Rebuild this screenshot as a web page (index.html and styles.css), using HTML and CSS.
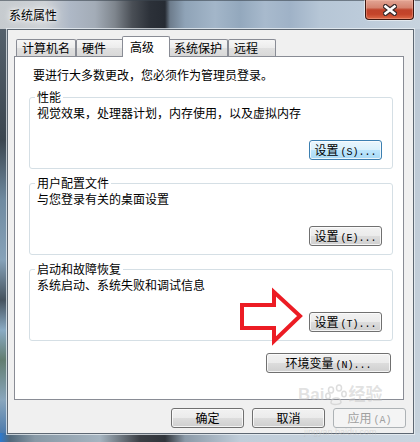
FILE: index.html
```html
<!DOCTYPE html>
<html lang="zh-CN">
<head>
<meta charset="utf-8">
<title>系统属性</title>
<link rel="stylesheet" href="styles.css">
</head>
<body>
<div class="window">
  <div class="titlebar">
    <span class="title">系统属性</span>
    <div class="close">
      <svg width="14" height="12" viewBox="-7 -6 14 12">
        <path d="M-4.5,-3.5 L4.5,3.5 M4.5,-3.5 L-4.5,3.5" stroke="#3a2a2a" stroke-width="5" stroke-linecap="square" fill="none"/>
        <path d="M-4.5,-3.5 L4.5,3.5 M4.5,-3.5 L-4.5,3.5" stroke="#ffffff" stroke-width="2.6" stroke-linecap="square" fill="none"/>
      </svg>
    </div>
  </div>
  <div class="client">
    <div class="tabs">
      <div class="tab">计算机名</div>
      <div class="tab">硬件</div>
      <div class="tab active">高级</div>
      <div class="tab">系统保护</div>
      <div class="tab">远程</div>
    </div>
    <div class="panel">
      <p class="intro">要进行大多数更改，您必须作为管理员登录。</p>
      <fieldset class="group">
        <legend>性能</legend>
        <p class="desc">视觉效果，处理器计划，内存使用，以及虚拟内存</p>
        <div class="row"><button class="btn hot">设置<span class="a">(S)...</span></button></div>
      </fieldset>
      <fieldset class="group">
        <legend>用户配置文件</legend>
        <p class="desc">与您登录有关的桌面设置</p>
        <div class="row"><button class="btn">设置<span class="a">(E)...</span></button></div>
      </fieldset>
      <fieldset class="group">
        <legend>启动和故障恢复</legend>
        <p class="desc">系统启动、系统失败和调试信息</p>
        <div class="row"><button class="btn">设置<span class="a">(T)...</span></button></div>
      </fieldset>
      <div class="row env-row"><button class="btn wide">环境变量<span class="a">(N)...</span></button></div>
    </div>
    <div class="footer">
      <button class="btn">确定</button>
      <button class="btn">取消</button>
      <button class="btn" disabled>应用<span class="a">(A)</span></button>
    </div>
  </div>
  <svg class="arrow" width="420" height="442" viewBox="0 0 420 442">
    <polygon points="242,305 274,305 274,292 300,316 274,341 274,328 242,328" fill="none" stroke="#ec1c24" stroke-width="4" stroke-linejoin="miter"/>
  </svg>
  <div class="watermark">
    <span class="wm-big">Bai</span><span class="wm-paw">
      <svg width="22" height="22" viewBox="0 0 22 22">
        <g fill="none" stroke="#c8c8c8" stroke-width="1.5">
          <ellipse cx="6" cy="6" rx="2.5" ry="3"/>
          <ellipse cx="14" cy="4" rx="2.5" ry="3"/>
          <ellipse cx="19" cy="10" rx="2.2" ry="2.8"/>
          <ellipse cx="3" cy="12" rx="2.2" ry="2.8"/>
          <path d="M6,19 C6,13 15,12 16,18 C16,21 7,21 6,19 Z"/>
        </g>
      </svg></span><span class="wm-big">经验</span>
    <div class="wm-small">jingyan.baidu.com</div>
  </div>
</div>
</body>
</html>
```
FILE: styles.css
```css
html, body {
  margin: 0;
  padding: 0;
}
body {
  width: 420px;
  height: 442px;
  overflow: hidden;
  font-family: "Noto Sans CJK SC", "Noto Sans CJK JP", sans-serif;
  font-size: 12px;
  line-height: 14px;
  color: #000;
  background: #a9b6c2;
}
.window {
  position: relative;
  width: 420px;
  height: 442px;
  display: flex;
  flex-direction: column;
  box-sizing: border-box;
  background:
    linear-gradient(to right, #c6cbcf 0, #ced2d6 45px, #aeb8c6 70px, #a3acb7 95px, #7e858d 115px, #4a4f56 132px, #2c3139 150px, #262b33 165px, #6d7c8c 170px, #8fa3b7 185px, #a3b6c9 215px, #93a8bd 240px, #a8bacd 265px, #9fb2c7 290px, #b6c6d6 320px, #bccbda 360px, #c8d4df 420px) left top / 100% 29px no-repeat,
    linear-gradient(to right, #2c7ad0 0, #52697b 10px, #8899a6 35px, #a5b4c0 100px, #3b3f45 140px, #30353b 165px, #8b9aa8 185px, #c0cdd9 240px, #c9d5e0 420px) left bottom / 100% 9px no-repeat,
    linear-gradient(#5b6772 0, #3b4650 140px, #6f8aa0 200px, #86a2b9 260px, #45525e 300px, #8aabc4 330px, #627d70 360px, #89a6bd 400px, #3d6fa8 442px) left top / 7px 100% no-repeat,
    linear-gradient(#b9c6d3, #c7d2dc) right top / 7px 100% no-repeat;
}
.titlebar {
  height: 29px;
  flex: none;
  display: flex;
  justify-content: space-between;
  align-items: flex-start;
  padding-left: 9px;
  box-shadow: inset 0 1px 0 rgba(60, 70, 80, 0.6);
}
.title {
  margin-top: 8px;
  line-height: 14px;
  text-shadow: 0 0 6px rgba(255, 255, 255, 0.95), 0 0 3px rgba(255, 255, 255, 0.9), 0 0 10px rgba(255, 255, 255, 0.7);
}
.close {
  width: 49px;
  height: 20px;
  margin-right: 6px;
  box-sizing: border-box;
  border: 1px solid #3e1710;
  border-top: none;
  border-radius: 0 0 4px 4px;
  background: linear-gradient(#e2a595 0%, #d58470 40%, #c0432b 52%, #c4442a 75%, #dd6a48 100%);
  box-shadow: 0 0 0 1px rgba(255, 255, 255, 0.5), inset 0 0 0 1px rgba(255, 200, 180, 0.35);
  display: flex;
  align-items: center;
  justify-content: center;
}
.close svg {
  display: block;
}
.client {
  flex: 1;
  margin: 0 6px 8px 7px;
  border: 1px solid #5d6772;
  background: #f0f0f0;
  padding: 6px 0 0 6px;
  box-shadow: 0 0 0 1px rgba(235, 240, 244, 0.75);
  display: flex;
  flex-direction: column;
}
.tabs {
  display: flex;
  align-items: flex-end;
  height: 20px;
  padding-left: 2px;
}
.tab {
  box-sizing: border-box;
  height: 17px;
  min-width: 48px;
  padding: 0 5px;
  border: 1px solid #898c95;
  border-bottom: none;
  border-radius: 2px 2px 0 0;
  background: linear-gradient(#f6f6f6 0%, #ececec 50%, #e0e0e0 51%, #d8d8d8 100%);
  line-height: 16px;
  white-space: nowrap;
}
.tab.active {
  position: relative;
  z-index: 1;
  height: 21px;
  margin: 0 -2px -1px;
  padding: 0 7px 1px;
  background: #fff;
  line-height: 19px;
}
.panel {
  box-sizing: border-box;
  width: 390px;
  height: 344px;
  border: 1px solid #898c95;
  background: #fff;
  padding: 11px 10px 0 14px;
}
.intro {
  margin: 0 0 8px 4px;
}
.group {
  margin: 0 0 7px;
  padding: 2px 10px 8px 7px;
  border: 1px solid #d5dfe5;
  border-radius: 3px;
  min-width: 0;
}
.group legend {
  padding: 0 2px;
  margin-left: -2px;
  line-height: 14px;
}
.desc {
  margin: 0;
}
.row {
  display: flex;
  justify-content: flex-end;
  margin-top: 20px;
}
.env-row {
  margin-top: 12px;
  margin-right: 2px;
}
.btn {
  box-sizing: border-box;
  width: 73px;
  height: 20px;
  padding: 0;
  margin: 0;
  border: 1px solid #707070;
  border-radius: 3px;
  background: linear-gradient(#f2f2f2 0%, #ebebeb 50%, #dddddd 50%, #cfcfcf 100%);
  box-shadow: inset 0 0 0 1px rgba(252, 252, 252, 0.8);
  font-family: inherit;
  font-size: 12px;
  line-height: 18px;
  color: #000;
  text-align: center;
  white-space: nowrap;
}
.btn.hot {
  border-color: #3c7fb1;
  background: linear-gradient(#eaf6fd 0%, #d9f0fc 50%, #bee6fd 50%, #a7d9f5 100%);
}
.btn.wide {
  width: 125px;
}
.btn:disabled {
  border-color: #adb2b5;
  background: #f4f4f4;
  color: #a0a0a0;
  box-shadow: none;
}
.a {
  font-family: "Liberation Mono", "DejaVu Sans Mono", monospace;
  font-size: 10px;
  margin-left: 2px;
}
.footer {
  display: flex;
  justify-content: flex-end;
  gap: 8px;
  margin-top: 8px;
  padding-right: 7px;
}
.arrow {
  position: absolute;
  left: 0;
  top: 0;
  pointer-events: none;
}
.watermark {
  position: absolute;
  left: 298px;
  top: 383px;
  color: rgba(190, 190, 190, 0.45);
  pointer-events: none;
  font-family: "Liberation Sans", "Noto Sans CJK SC", sans-serif;
}
.wm-big {
  font-size: 17px;
  font-weight: bold;
  line-height: 24px;
  vertical-align: middle;
}
.wm-paw {
  display: inline-block;
  vertical-align: middle;
  opacity: 0.6;
  margin: 0 1px;
}
.wm-paw svg {
  display: block;
}
.wm-small {
  font-size: 9px;
  line-height: 10px;
  margin-top: 20px;
  margin-left: 6px;
}
```
